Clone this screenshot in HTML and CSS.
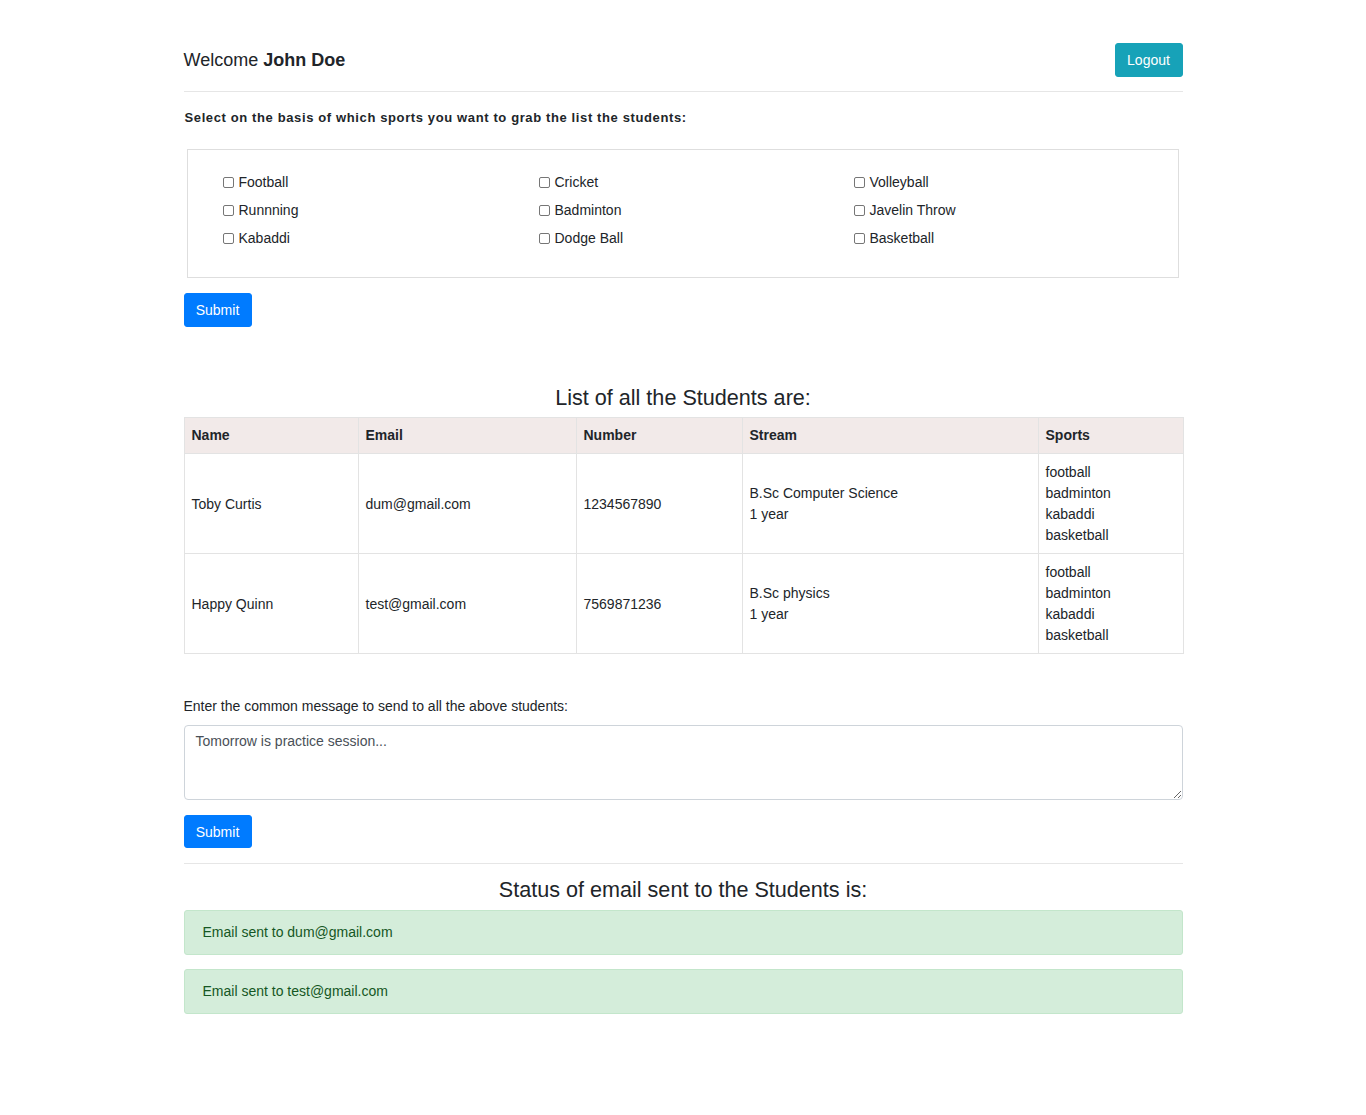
FILE: index.html
```html
<!DOCTYPE html>
<html>
<head>
<meta charset="utf-8">
<title>Students</title>
<link rel="stylesheet" href="styles.css">
</head>
<body>
<div class="page">
  <header class="topbar">
    <div class="welcome">Welcome <b>John Doe</b></div>
    <button class="btn btn-info">Logout</button>
  </header>
  <hr class="rule">
  <p class="select-label">Select on the basis of which sports you want to grab the list the students:</p>
  <div class="sports-box">
    <div class="sports-grid">
      <label class="chk"><input type="checkbox"> Football</label>
      <label class="chk"><input type="checkbox"> Cricket</label>
      <label class="chk"><input type="checkbox"> Volleyball</label>
      <label class="chk"><input type="checkbox"> Runnning</label>
      <label class="chk"><input type="checkbox"> Badminton</label>
      <label class="chk"><input type="checkbox"> Javelin Throw</label>
      <label class="chk"><input type="checkbox"> Kabaddi</label>
      <label class="chk"><input type="checkbox"> Dodge Ball</label>
      <label class="chk"><input type="checkbox"> Basketball</label>
    </div>
  </div>
  <button class="btn btn-primary submit-1">Submit</button>

  <h3 class="section-title list-title">List of all the Students are:</h3>
  <table class="students">
    <colgroup>
      <col class="c-name"><col class="c-email"><col class="c-num"><col class="c-stream"><col class="c-sports">
    </colgroup>
    <thead>
      <tr><th>Name</th><th>Email</th><th>Number</th><th>Stream</th><th>Sports</th></tr>
    </thead>
    <tbody>
      <tr>
        <td>Toby Curtis</td>
        <td>dum@gmail.com</td>
        <td>1234567890</td>
        <td>B.Sc Computer Science<br>1 year</td>
        <td>football<br>badminton<br>kabaddi<br>basketball</td>
      </tr>
      <tr>
        <td>Happy Quinn</td>
        <td>test@gmail.com</td>
        <td>7569871236</td>
        <td>B.Sc physics<br>1 year</td>
        <td>football<br>badminton<br>kabaddi<br>basketball</td>
      </tr>
    </tbody>
  </table>

  <label class="msg-label" for="msg">Enter the common message to send to all the above students:</label>
  <textarea id="msg" class="msg">Tomorrow is practice session...</textarea>
  <button class="btn btn-primary submit-2">Submit</button>
  <hr class="rule rule-2">
  <h3 class="section-title status-title">Status of email sent to the Students is:</h3>
  <div class="alert">Email sent to dum@gmail.com</div>
  <div class="alert">Email sent to test@gmail.com</div>
</div>
</body>
</html>
```
FILE: styles.css
```css
* { box-sizing: border-box; }
html, body { margin: 0; padding: 0; background: #fff; }
body {
  font-family: "Liberation Sans", Arial, sans-serif;
  font-size: 14px;
  line-height: 1.5;
  color: #212529;
}
.page {
  width: 999px;
  margin: 0 auto;
  padding-top: 43px;
  padding-bottom: 60px;
}
.topbar {
  display: flex;
  justify-content: space-between;
  align-items: center;
  height: 34px;
}
.welcome { font-size: 18px; color: #212529; padding-top: 1px; }
.welcome b { font-weight: bold; }
.btn {
  font-family: "Liberation Sans", Arial, sans-serif;
  font-size: 14px;
  line-height: 20px;
  color: #fff;
  border: 1px solid transparent;
  border-radius: 3px;
  padding: 6px 11px;
  height: 34px;
  width: 68px;
  cursor: pointer;
}
.btn-info { background: #17a2b8; border-color: #17a2b8; }
.btn-primary { background: #007bff; border-color: #007bff; display: block; }
.rule {
  border: 0;
  border-top: 1px solid #e6e6e6;
  margin: 14px 0 0 0;
}
.select-label {
  font-weight: bold;
  font-size: 13px;
  letter-spacing: 0.62px;
  margin: 16px 0 0 1px;
  line-height: 20px;
}
.sports-box {
  margin: 21px 4px 0 3px;
  border: 1px solid #dedede;
  padding: 22px 0 28px 35px;
}
.sports-grid {
  display: grid;
  grid-template-columns: 316px 315px 316px;
  row-gap: 7px;
}
.chk {
  display: flex;
  align-items: center;
  line-height: 21px;
  color: #212529;
}
.chk input {
  width: 11px;
  height: 11px;
  margin: -1px 5px 0 0;
  appearance: none;
  -webkit-appearance: none;
  border: 1px solid #767676;
  border-radius: 2px;
  background: #fff;
}
.submit-1 { margin-top: 15px; }
.section-title {
  font-weight: normal;
  font-size: 21.6px;
  line-height: 26px;
  text-align: center;
  margin: 0;
  color: #212529;
}
.list-title { margin-top: 58px; margin-bottom: 6px; }
.students {
  width: 999px;
  border-collapse: collapse;
  table-layout: fixed;
}
.c-name { width: 174px; }
.c-email { width: 218px; }
.c-num { width: 166px; }
.c-stream { width: 296px; }
.c-sports { width: 145px; }
.students th, .students td {
  border: 1px solid #e3e3e3;
  padding: 8px 7px 7px;
  text-align: left;
  vertical-align: middle;
  line-height: 21px;
}
.students th { background: #f2eae9; font-weight: bold; padding: 7px; }
.msg-label {
  display: block;
  margin-top: 42px;
  line-height: 21px;
}
.msg {
  display: block;
  width: 999px;
  height: 75px;
  margin-top: 8px;
  border: 1px solid #ced4da;
  border-radius: 4px;
  padding: 5px 11px;
  font-family: "Liberation Sans", Arial, sans-serif;
  font-size: 14px;
  line-height: 21px;
  color: #495057;
  resize: vertical;
}
.submit-2 { margin-top: 15px; height: 33px; }
.rule-2 { margin-top: 15px; }
.status-title { margin-top: 13px; margin-bottom: 7px; }
.alert {
  background: #d4edda;
  border: 1px solid #c3e6cb;
  color: #155724;
  border-radius: 3px;
  padding: 11px 18px;
  line-height: 21px;
  margin-bottom: 14px;
}
```
